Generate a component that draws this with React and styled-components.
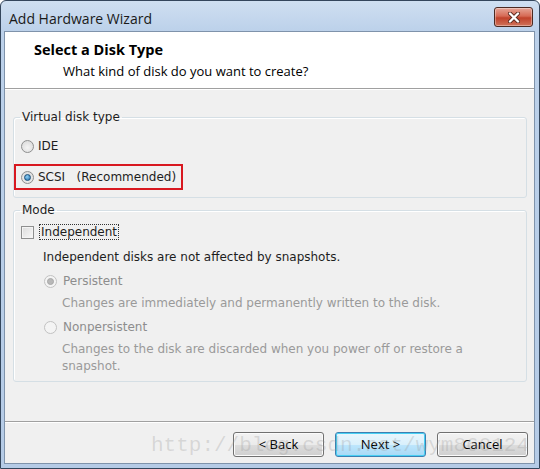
import React from 'react';
import styled, { createGlobalStyle } from 'styled-components';

const GlobalStyle = createGlobalStyle`
  body {
    margin: 0;
    background: #ffffff;
  }
`;

const Window = styled.div`
  position: relative;
  width: 540px;
  height: 469px;
  box-sizing: border-box;
  border: 1px solid #34465c;
  border-radius: 6px 6px 0 0;
  background: linear-gradient(#cfdff1, #bcd1ea 30px, #b5cbe6);
  display: flex;
  flex-direction: column;
  padding: 0 4px 4px 3px;
  font-family: "DejaVu Sans", Tahoma, sans-serif;
`;

const TitleBar = styled.div`
  height: 30px;
  display: flex;
  align-items: center;
  justify-content: space-between;
  padding: 0 2px 0 5px;
`;

const Title = styled.div`
  font-family: "Open Sans", "Segoe UI", sans-serif;
  font-size: 14px;
  color: #1a1a1a;
  margin-top: 4px;
`;

const CloseButton = styled.div`
  width: 37px;
  height: 18px;
  margin-top: 2px;
  border: 1px solid #4b2a22;
  border-radius: 3px;
  background: linear-gradient(#e6a596, #d66a55 45%, #c0422b 55%, #d0735a);
  display: flex;
  align-items: center;
  justify-content: center;
  box-shadow: inset 0 0 0 1px rgba(255, 255, 255, 0.35);
`;

const Client = styled.div`
  flex: 1;
  display: flex;
  flex-direction: column;
  border: 1px solid #7f93ab;
  background: #f0f0f0;
`;

const Header = styled.div`
  height: 57px;
  box-sizing: border-box;
  background: #ffffff;
  border-bottom: 1px solid #a0a0a0;
  box-shadow: 0 1px 0 #ffffff;
  padding: 9px 0 0 29px;
`;

const HeaderTitle = styled.div`
  font-family: "Open Sans", "Segoe UI", sans-serif;
  font-weight: 700;
  font-size: 14.5px;
  color: #000;
  line-height: 18px;
`;

const HeaderSub = styled.div`
  font-family: "Open Sans", "Segoe UI", sans-serif;
  font-size: 13px;
  color: #000;
  line-height: 18px;
  margin-left: 29px;
  margin-top: 3px;
`;

const Body = styled.div`
  flex: 1;
  padding: 21px 7px 0 8px;
  display: flex;
  flex-direction: column;
  gap: 5px;
`;

const Group = styled.fieldset`
  margin: 0;
  border: 1px solid #d5dfe5;
  border-radius: 3px;
  padding: ${(p) => p.$pad};
  box-sizing: border-box;
  box-shadow: inset 1px 1px 0 #ffffff;
`;

const Legend = styled.legend`
  font-size: 12px;
  color: #1e1e1e;
  padding: 0 2px;
  margin-left: -1px;
  line-height: 14px;
`;

const Row = styled.div`
  display: flex;
  align-items: center;
  gap: ${(p) => p.$gap || 4}px;
  height: ${(p) => p.$h || 24}px;
  margin-top: ${(p) => p.$mt || 0}px;
  padding-left: ${(p) => p.$indent || 0}px;
  font-size: 12px;
  color: ${(p) => (p.$disabled ? '#8d8d8d' : '#1e1e1e')};
`;

const Highlight = styled.div`
  display: inline-flex;
  align-items: center;
  gap: 4px;
  height: 22px;
  margin-left: -7px;
  padding: 0 5px 0 5px;
  border: 2px solid #d81820;
`;

const Note = styled.div`
  font-size: 12px;
  line-height: 17px;
  padding-left: ${(p) => p.$indent}px;
  margin-top: ${(p) => p.$mt || 0}px;
  color: ${(p) => (p.$disabled ? '#9a9a9a' : '#1e1e1e')};
`;

const Radio = styled.span`
  width: 11px;
  height: 11px;
  border-radius: 50%;
  border: 1px solid ${(p) => (p.$disabled ? '#c2c2c2' : '#8e8f8f')};
  background: ${(p) => (p.$disabled ? '#f4f4f4' : 'radial-gradient(circle at 50% 60%, #f4f4f4, #d6d6d6)')};
  display: inline-flex;
  align-items: center;
  justify-content: center;
  flex-shrink: 0;
  &::after {
    content: '';
    display: ${(p) => (p.$checked ? 'block' : 'none')};
    width: 5px;
    height: 5px;
    border-radius: 50%;
    background: ${(p) => (p.$disabled ? '#b8b8b8' : 'radial-gradient(circle at 40% 35%, #8fd0f5, #1c6aa8)')};
    border: 1px solid ${(p) => (p.$disabled ? '#a8a8a8' : '#1b4f7a')};
  }
`;

const Checkbox = styled.span`
  width: 11px;
  height: 11px;
  border: 1px solid #8e8f8f;
  background: linear-gradient(135deg, #dcdcdc, #f8f8f8);
  box-shadow: inset 0 0 0 1px #f4f4f4;
  flex-shrink: 0;
  margin-right: 2px;
`;

const Focus = styled.span`
  outline: 1px dotted #333;
  padding: 0 1px;
`;

const Footer = styled.div`
  height: 42px;
  box-sizing: border-box;
  border-top: 1px solid #a0a0a0;
  box-shadow: inset 0 1px 0 #ffffff;
  display: flex;
  align-items: center;
  justify-content: flex-end;
  gap: 11px;
  padding: 3px 6px 0 0;
`;

const Button = styled.div`
  width: 91px;
  height: 25px;
  box-sizing: border-box;
  border: 1px solid ${(p) => (p.$default ? '#3c7fb1' : '#707070')};
  border-radius: 3px;
  background: ${(p) =>
    p.$default
      ? 'linear-gradient(#eaf6fd, #d9f0fc 50%, #bee6fd 50%, #a7d9f5)'
      : 'linear-gradient(#f2f2f2, #ebebeb 50%, #dddddd 50%, #cfcfcf)'};
  box-shadow: inset 0 0 0 1px ${(p) => (p.$default ? '#48d0f4' : '#fbfbfb')};
  font-family: "Open Sans", "Segoe UI", sans-serif;
  font-size: 13px;
  color: #000;
  display: flex;
  align-items: center;
  justify-content: center;
`;

const Watermark = styled.div`
  position: absolute;
  left: 150px;
  top: 433px;
  font-family: "Liberation Mono", "Courier New", monospace;
  font-size: 21px;
  color: rgba(150, 150, 150, 0.28);
  pointer-events: none;
  white-space: nowrap;
`;

export default function App() {
  return (
    <>
      <GlobalStyle />
      <Window>
        <TitleBar>
          <Title>Add Hardware Wizard</Title>
          <CloseButton>
            <svg width="14" height="11" viewBox="0 0 14 11">
              <path d="M3 1.5 L11 9.5 M11 1.5 L3 9.5" stroke="#5a2a20" strokeWidth="4" strokeLinecap="round" />
              <path d="M3 1.5 L11 9.5 M11 1.5 L3 9.5" stroke="#ffffff" strokeWidth="2.4" strokeLinecap="round" />
            </svg>
          </CloseButton>
        </TitleBar>
        <Client>
          <Header>
            <HeaderTitle>Select a Disk Type</HeaderTitle>
            <HeaderSub>What kind of disk do you want to create?</HeaderSub>
          </Header>
          <Body>
            <Group $pad="0 6px 7px 7px">
              <Legend>Virtual disk type</Legend>
              <Row $h={26} $mt={9}>
                <Radio />
                <span>IDE</span>
              </Row>
              <Row $h={26} $mt={5}>
                <Highlight>
                  <Radio $checked />
                  <span>SCSI&nbsp;&nbsp;&nbsp;(Recommended)</span>
                </Highlight>
              </Row>
            </Group>
            <Group $pad="0 6px 6px 7px">
              <Legend>Mode</Legend>
              <Row $h={22} $mt={4}>
                <Checkbox />
                <Focus>Independent</Focus>
              </Row>
              <Note $indent={22} $mt={6}>Independent disks are not affected by snapshots.</Note>
              <Row $indent={23} $mt={3} $gap={6} $disabled>
                <Radio $checked $disabled />
                <span>Persistent</span>
              </Row>
              <Note $indent={41} $mt={2} $disabled>Changes are immediately and permanently written to the disk.</Note>
              <Row $indent={23} $mt={3} $gap={6} $disabled>
                <Radio $disabled />
                <span>Nonpersistent</span>
              </Row>
              <Note $indent={41} $mt={2} $disabled>
                Changes to the disk are discarded when you power off or restore a
                <br />
                snapshot.
              </Note>
            </Group>
          </Body>
          <Footer>
            <Button>&lt; Back</Button>
            <Button $default>Next &gt;</Button>
            <Button>Cancel</Button>
          </Footer>
        </Client>
        <Watermark>http://blog.csdn.net/wym860124</Watermark>
      </Window>
    </>
  );
}
